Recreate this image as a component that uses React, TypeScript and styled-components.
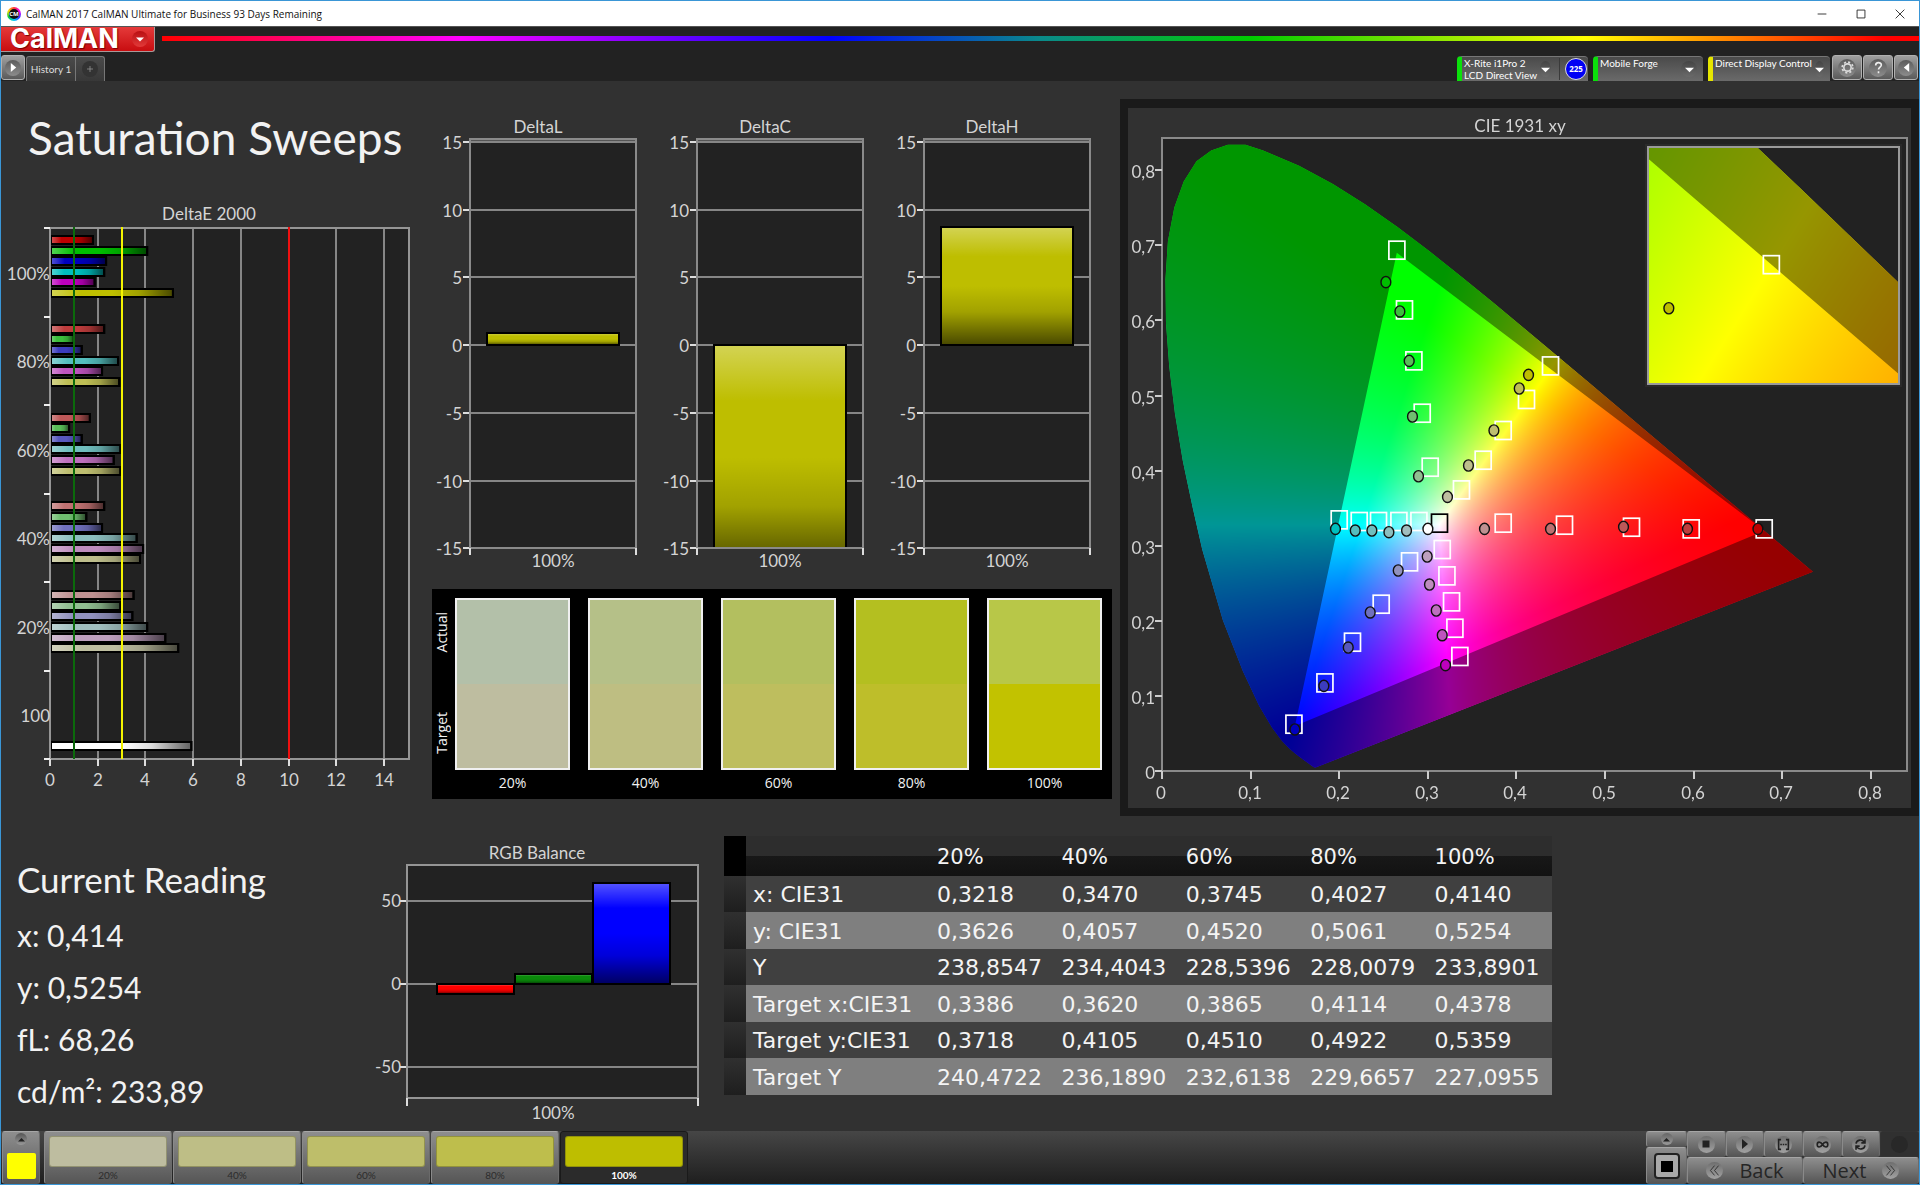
import React, { useEffect, useRef } from 'react';
import styled, { createGlobalStyle, css } from 'styled-components';

const UI = '"Lato", "Open Sans", sans-serif';
const SYSTEM = '"Open Sans", "Noto Sans", sans-serif';

const GlobalStyle = createGlobalStyle`
  *, *::before, *::after { box-sizing: border-box; }
  body { margin: 0; background: #313131; }
  button { font: inherit; color: inherit; border: 0; padding: 0; margin: 0; background: none; cursor: pointer; }
  h1, h2, p, table { margin: 0; }
`;

/* ---------- window ---------- */

const Window = styled.div`
  min-height: 100vh;
  display: flex;
  flex-direction: column;
  border: 1px solid #3a96d6;
  background: #313131;
  color: #f2f2f2;
  font-family: ${UI};
`;

const TitleBar = styled.header`
  height: 25px;
  display: flex;
  align-items: center;
  background: #fff;
  color: #111;
  font-family: ${SYSTEM};
  font-size: 10px;
  padding-left: 6px;
`;

const AppBadge = styled.span`
  width: 14px;
  height: 14px;
  margin-right: 5px;
  border-radius: 50%;
  display: grid;
  place-items: center;
  background: conic-gradient(#f33, #f0f, #33f, #0cf, #0c4, #fd0, #f33);
`;

const AppBadgeCore = styled.span`
  width: 10px;
  height: 10px;
  border-radius: 50%;
  background: #111;
  color: #fff;
  font-size: 6px;
  font-weight: 700;
  line-height: 10px;
  text-align: center;
`;

const WindowControls = styled.div`
  margin-left: auto;
  display: flex;
`;

const WindowButton = styled.button`
  width: 39px;
  height: 24px;
  display: grid;
  place-items: center;
`;

const BrandBar = styled.div`
  height: 26px;
  display: flex;
  align-items: flex-start;
  gap: 7px;
  background: #222;
  border-top: 1px solid #555;
`;

const Brand = styled.button`
  width: 154px;
  height: 25px;
  display: flex;
  align-items: center;
  justify-content: space-between;
  padding: 0 6px 0 9px;
  border-right: 1px solid #a99;
  border-bottom: 1px solid #a99;
  border-radius: 0 0 3px 0;
  background: linear-gradient(#e53a3a, #c80d10);
  color: #fff;
  font-family: "Inter", sans-serif;
  font-size: 27px;
  font-weight: 700;
  line-height: 24px;
  text-shadow: 1px 1px 1px #7a0000;
`;

const Spectrum = styled.div`
  flex: 1;
  height: 5px;
  margin-top: 9px;
  background: linear-gradient(90deg, #f00, #f0f 17%, #00f 38%, #0a8a8a 50%, #0c0 62%, #ff0 81%, #f00 98%);
`;

const TabBar = styled.nav`
  height: 29px;
  display: flex;
  align-items: flex-end;
  background: #222;
  font-size: 10px;
  line-height: 12px;
`;

const SquareButton = styled.button<{ $wide?: boolean }>`
  width: ${p => (p.$wide ? 30 : 24)}px;
  height: 25px;
  margin: 0 1px 1px 0;
  display: grid;
  place-items: center;
  border: 1px solid #b0b0b0;
  border-radius: 3px;
  background: linear-gradient(#a0a0a0, #5a5a5a);
  color: #eee;
`;

const Tab = styled.button<{ $narrow?: boolean }>`
  height: 25px;
  width: ${p => (p.$narrow ? 29 : 50)}px;
  display: grid;
  place-items: center;
  border: 1px solid #777;
  border-bottom: 0;
  border-left-width: ${p => (p.$narrow ? 0 : 1)}px;
  border-radius: ${p => (p.$narrow ? '0 3px 0 0' : '3px 0 0 0')};
  background: linear-gradient(#4a4a4a, #383838);
  color: #ddd;
`;

const Knob = styled.span<{ $size: number; $tone?: string }>`
  width: ${p => p.$size}px;
  height: ${p => p.$size}px;
  border-radius: 50%;
  display: grid;
  place-items: center;
  background: ${p => p.$tone || 'linear-gradient(#5c5c5c, #8c8c8c)'};
`;

const DeviceKnob = styled(Knob)`
  align-self: flex-end;
  margin-bottom: 4px;
`;

const Devices = styled.div`
  margin-left: auto;
  display: flex;
  align-items: flex-end;
  gap: 5px;
  padding-right: 2px;
`;

const Device = styled.button<{ $led: string; $width: number }>`
  height: 25px;
  width: ${p => p.$width}px;
  display: flex;
  align-items: flex-start;
  padding: 0 6px 0 2px;
  gap: 3px;
  border-top: 1px solid #777;
  border-left: 5px solid ${p => p.$led};
  border-radius: 4px 4px 0 0;
  background: linear-gradient(#4a4a4a, #6a6a6a);
  color: #fff;
  text-align: left;
`;

const DeviceText = styled.span`
  flex: 1;
  white-space: pre;
`;

const Counter = styled.span`
  width: 29px;
  height: 22px;
  margin: 1px -5px 0 5px;
  padding-left: 5px;
  border-left: 1px solid #3a3a3a;
`;

const CounterDisc = styled.span`
  width: 22px;
  height: 22px;
  display: block;
  border: 1px solid #ddd;
  border-radius: 50%;
  background: #0000f5;
  font-family: "Open Sans", sans-serif;
  font-size: 8px;
  font-weight: 700;
  line-height: 20px;
  text-align: center;
`;

/* ---------- workspace ---------- */

const Workspace = styled.main`
  flex: 1;
  padding-top: 1px;
`;

const Upper = styled.section`
  display: grid;
  grid-template-columns: minmax(0, 419fr) minmax(0, 700fr) minmax(0, 799fr);
  align-items: start;
`;

const Lower = styled.section`
  display: grid;
  grid-template-columns: minmax(0, 369fr) minmax(0, 354fr) minmax(0, 828fr) minmax(0, 367fr);
  align-items: start;
  padding-top: 1px;
`;

const PageTitle = styled.h1`
  padding: 26px 0 32px 27px;
  font-size: 46px;
  font-weight: 400;
  line-height: 60px;
  white-space: nowrap;
`;

const Chart = styled.svg`
  display: block;
  width: 100%;
  height: auto;
  font-family: ${UI};
  font-size: 17px;
  fill: #d4d4d4;
`;

const Middle = styled.div`
  padding-top: 28px;
`;

const DeltaRow = styled.div`
  display: grid;
  grid-template-columns: repeat(3, minmax(0, 1fr));
  padding-right: 19px;
`;

const Swatches = styled.div`
  margin: 19px 8px 0 12px;
  padding: 9px 10px 0 0;
  height: 210px;
  display: flex;
  background: #000;
`;

const SideLabels = styled.div`
  width: 23px;
  height: 172px;
  padding: 14px 4px 16px 0;
  display: flex;
  flex-direction: column;
  justify-content: space-between;
  align-items: center;
  font-family: ${SYSTEM};
  font-size: 14px;
  line-height: 16px;
`;

const SideLabel = styled.span`
  writing-mode: vertical-rl;
  transform: rotate(180deg);
`;

const SwatchGrid = styled.div`
  flex: 1;
  display: grid;
  grid-template-columns: repeat(5, minmax(0, 1fr));
  gap: 18px;
`;

const SwatchLabel = styled.p`
  padding-top: 3px;
  font-family: ${SYSTEM};
  font-size: 14px;
  line-height: 20px;
  text-align: center;
`;

const SwatchBox = styled.div<{ $actual: string; $target: string }>`
  height: 172px;
  border: 2px solid #f0f0f0;
  background: linear-gradient(${p => p.$actual} 50%, ${p => p.$target} 50%);
`;

const CiePanel = styled.div`
  margin-top: 17px;
  border: 8px solid #1a1a1a;
  border-top-width: 9px;
  display: grid;
`;

const CieCanvas = styled.canvas`
  grid-area: 1 / 1;
  width: 100%;
  height: auto;
`;

const CieOverlay = styled(Chart)`
  grid-area: 1 / 1;
`;

const Readings = styled.div`
  padding: 36px 0 0 16px;
  font-size: 30px;
  line-height: 52px;
  white-space: nowrap;
`;

const ReadingTitle = styled.h2`
  font-size: 35px;
  font-weight: 400;
  line-height: 52px;
  padding-bottom: 4px;
`;

const RgbWrap = styled.div`
  padding-top: 18px;
`;

const DataTable = styled.table`
  width: 100%;
  margin-top: 19px;
  table-layout: fixed;
  border-collapse: collapse;
  font-family: "DejaVu Sans", sans-serif;
  font-size: 22px;
  line-height: 34px;
  white-space: nowrap;
  color: #f4f4f4;
`;

const Cell = styled.td`
  padding: 2px 0 0 7px;
`;

const HeadCell = styled.th`
  height: 40px;
  padding: 2px 0 0 7px;
  font-size: 21px;
  font-weight: 400;
  line-height: 38px;
  text-align: left;
  background: linear-gradient(#2d2d2d 50%, #181818 50%, #121212);
`;

const CornerCell = styled.td`
  padding: 0;
  background: #000;
`;

const Gutter = styled.td`
  padding: 0;
  background: linear-gradient(#303030, #1e1e1e);
`;

const LabelCell = styled.th`
  padding: 2px 0 0 7px;
  font-weight: 400;
  text-align: left;
`;

const Row = styled.tr<{ $alt: boolean }>`
  height: ${p => (p.$alt ? 37 : 36)}px;
  background: ${p => (p.$alt ? '#7f7f7f' : '#404040')};
`;

/* ---------- bottom bar ---------- */

const BottomBar = styled.footer`
  height: 53px;
  display: flex;
  background: linear-gradient(#464646, #1e1e1e);
`;

const metal = css`
  border: 1px solid #9a9a9a;
  border-color: #a6a6a6 #6a6a6a #555 #8a8a8a;
  border-radius: 3px;
  background: linear-gradient(#8e8e8e, #565656);
`;

const PatternButton = styled.button`
  ${metal}
  width: 38px;
  margin: 0 4px 0 1px;
  padding: 1px 4px 4px;
  display: flex;
  flex-direction: column;
  align-items: center;
  justify-content: space-between;
`;

const PatternColor = styled.span`
  width: 29px;
  height: 26px;
  border-radius: 2px;
  background: #ff0;
`;

const StepButton = styled.button<{ $active: boolean }>`
  ${metal}
  width: 128px;
  margin-right: 1px;
  padding: 4px 4px 0;
  font-size: 10px;
  line-height: 17px;
  color: #2c2c2c;
  ${p => p.$active && css`
    border-color: #1a1a1a;
    background: #2b2b2b;
    color: #fff;
    font-weight: 700;
  `}
`;

const StepColor = styled.span<{ $color: string }>`
  display: block;
  height: 31px;
  border: 1px solid rgba(70, 70, 30, 0.35);
  border-radius: 3px;
  background: ${p => p.$color};
`;

const Transport = styled.div`
  margin-left: auto;
  display: flex;
`;

const ModeStack = styled.div`
  width: 41px;
  display: flex;
  flex-direction: column;
`;

const ModeUp = styled.button`
  ${metal}
  height: 16px;
  display: grid;
  place-items: center;
`;

const ModeStop = styled.button`
  ${metal}
  flex: 1;
  display: grid;
  place-items: center;
`;

const TransportGrid = styled.div`
  width: 232px;
  display: grid;
  grid-template-columns: repeat(6, 1fr);
  grid-template-rows: 26px 27px;
`;

const IconKey = styled.button<{ $off?: boolean }>`
  ${metal}
  display: grid;
  place-items: center;
  color: #222;
  ${p => p.$off && css`
    border-color: #333;
    background: #303030;
  `}
`;

const NavKey = styled.button`
  ${metal}
  grid-column: span 3;
  display: flex;
  align-items: center;
  justify-content: center;
  gap: 16px;
  font-family: ${SYSTEM};
  font-size: 20px;
  line-height: 22px;
  color: #262626;
`;

/* ---------- data ---------- */

type Point = [number, number];

const LEVELS = ['100%', '80%', '60%', '40%', '20%'];
const PRIMARY_TINTS = [0, 60, 88, 112, 145];
const SECONDARY_TINTS = [0, 84, 112, 140, 160];
const HUES: [number, number, number][] = [[1, 0, 0], [0, 1, 0], [0, 0, 1], [0, 1, 1], [1, 0, 1], [1, 1, 0]];

const sweepColor = (hue: number, level: number) => {
  const tint = (hue < 3 ? PRIMARY_TINTS : SECONDARY_TINTS)[level];
  return `rgb(${HUES[hue].map(c => (c ? 190 : tint)).join(',')})`;
};

const DELTA_E = [
  [1.8, 4.07, 2.35, 2.27, 1.87, 5.15],
  [2.27, 1.0, 1.33, 2.85, 2.18, 2.9],
  [1.67, 0.8, 1.33, 2.95, 2.67, 2.95],
  [2.27, 1.52, 2.18, 3.63, 3.9, 3.77],
  [3.5, 2.95, 3.45, 4.07, 4.83, 5.37],
];
const DELTA_E_WHITE = 5.92;

const SWATCHES = [
  ['20%', '#b3c0a9', '#bebda0'],
  ['40%', '#b5c088', '#bebe82'],
  ['60%', '#b3bf5f', '#bebe5e'],
  ['80%', '#b4bf20', '#bebe2a'],
  ['100%', '#b8c748', '#c2c200'],
];

const STEPS = [
  ['20%', '#bebda0'],
  ['40%', '#bebe86'],
  ['60%', '#bebe6a'],
  ['80%', '#bebe4c'],
  ['100%', '#bebe00'],
];

const TABLE = [
  ['x: CIE31', '0,3218', '0,3470', '0,3745', '0,4027', '0,4140'],
  ['y: CIE31', '0,3626', '0,4057', '0,4520', '0,5061', '0,5254'],
  ['Y', '238,8547', '234,4043', '228,5396', '228,0079', '233,8901'],
  ['Target x:CIE31', '0,3386', '0,3620', '0,3865', '0,4114', '0,4378'],
  ['Target y:CIE31', '0,3718', '0,4105', '0,4510', '0,4922', '0,5359'],
  ['Target Y', '240,4722', '236,1890', '232,6138', '229,6657', '227,0955'],
];

// Targets and measurements per hue (R, G, B, C, M, Y), 100% down to 20%.
const TARGETS: Point[][] = [
  [[0.6797, 0.3224], [0.5973, 0.3224], [0.5299, 0.3246], [0.4543, 0.3273], [0.3851, 0.33]],
  [[0.2651, 0.6935], [0.2737, 0.614], [0.2843, 0.5461], [0.2937, 0.4764], [0.3027, 0.4045]],
  [[0.1489, 0.0623], [0.1839, 0.1173], [0.215, 0.1715], [0.2474, 0.2221], [0.2794, 0.2785]],
  [[0.2, 0.3344], [0.2226, 0.3322], [0.2444, 0.3322], [0.2674, 0.3322], [0.29, 0.3322]],
  [[0.3362, 0.1525], [0.3306, 0.1901], [0.3268, 0.2252], [0.3216, 0.2598], [0.3163, 0.2949]],
  [[0.4385, 0.5394], [0.4114, 0.4947], [0.3851, 0.4534], [0.3625, 0.4138], [0.338, 0.3743]],
];
const MEASURED: Point[][] = [
  [[0.6726, 0.3224], [0.5931, 0.3224], [0.5209, 0.325], [0.4385, 0.3224], [0.364, 0.3224]],
  [[0.2527, 0.6509], [0.2685, 0.6119], [0.279, 0.5461], [0.2827, 0.472], [0.2895, 0.3925]],
  [[0.15, 0.0553], [0.1827, 0.1133], [0.2102, 0.1644], [0.235, 0.2111], [0.2666, 0.267]],
  [[0.1958, 0.3224], [0.2181, 0.3202], [0.2369, 0.3202], [0.2561, 0.318], [0.276, 0.3202]],
  [[0.32, 0.1409], [0.3163, 0.1808], [0.3095, 0.2137], [0.3019, 0.2483], [0.2993, 0.2856]],
  [[0.4137, 0.5274], [0.4032, 0.5093], [0.3746, 0.4534], [0.3459, 0.4068], [0.3222, 0.365]],
];

const GAMUT: Point[] = [[0.68, 0.32], [0.265, 0.69], [0.15, 0.06]];

const LOCUS: Point[] = [
  [0.1741, 0.005], [0.1733, 0.0048], [0.1714, 0.0051], [0.1689, 0.0069], [0.1644, 0.0109],
  [0.1611, 0.0138], [0.1566, 0.0177], [0.151, 0.0227], [0.144, 0.0297], [0.1355, 0.0399],
  [0.1241, 0.0578], [0.1096, 0.0868], [0.0913, 0.1327], [0.0687, 0.2007], [0.0454, 0.295],
  [0.0346, 0.3508], [0.0235, 0.4127], [0.0146, 0.476], [0.0082, 0.5384], [0.0045, 0.5963],
  [0.0039, 0.6548], [0.0067, 0.7057], [0.0139, 0.7502], [0.0245, 0.7849], [0.0389, 0.812],
  [0.0555, 0.8262], [0.0743, 0.8338], [0.0943, 0.8338], [0.1142, 0.8262], [0.1547, 0.8059],
  [0.1929, 0.7816], [0.2296, 0.7543], [0.2658, 0.7243], [0.3016, 0.6923], [0.3373, 0.6589],
  [0.3731, 0.6245], [0.4087, 0.5896], [0.4441, 0.5547], [0.4788, 0.5202], [0.5125, 0.4866],
  [0.5448, 0.4544], [0.5752, 0.4242], [0.6029, 0.3965], [0.627, 0.3725], [0.6482, 0.3514],
  [0.6658, 0.334], [0.6801, 0.3197], [0.7006, 0.2993], [0.714, 0.2859], [0.726, 0.274], [0.7347, 0.2653],
];

/* ---------- chart parts ---------- */

const Gradients = ({ id, vertical }: { id: string; vertical?: boolean }) => (
  <defs>
    <linearGradient id={id} x1="0" y1="0" x2={vertical ? 0 : 1} y2={vertical ? 1 : 0}>
      <stop offset="0" stopColor="#fff" stopOpacity="0.33" />
      <stop offset="0.25" stopColor="#fff" stopOpacity="0" />
      <stop offset="0.5" stopColor="#000" stopOpacity="0" />
      <stop offset="0.72" stopColor="#000" stopOpacity="0.15" />
      <stop offset="1" stopColor="#000" stopOpacity="0.62" />
    </linearGradient>
  </defs>
);

interface BarProps { x: number; y: number; w: number; h: number; color: string; shade: string }

const Bar = ({ x, y, w, h, color, shade }: BarProps) => (
  <g stroke="#000" strokeWidth={2}>
    <rect x={x} y={y} width={w} height={h} fill={color} />
    <rect x={x} y={y} width={w} height={h} fill={`url(#${shade})`} />
  </g>
);

const DeltaEChart = () => {
  const left = 49, right = 408, top = 28, bottom = 559, unit = 23.87, band = 88.5;
  const px = (v: number) => Math.round(left + v * unit);
  return (
    <Chart viewBox="0 0 419 600" role="img" aria-label="DeltaE 2000">
      <Gradients id="shade-e" />
      <text x="208" y="20" textAnchor="middle">DeltaE 2000</text>
      <rect x={left} y={top} width={right - left} height={bottom - top} fill="#222" />
      {[2, 4, 6, 8, 10, 12, 14].map(v => (
        <path key={v} d={`M${px(v)} ${top}V${bottom}`} stroke="#868686" strokeWidth="2" />
      ))}
      {DELTA_E.map((group, g) =>
        group.map((v, i) => (
          <Bar key={`${g}-${i}`} x={left + 1} y={Math.round(36 + g * 88.8 + i * 10.6)} w={v * unit - 1} h={8}
            color={sweepColor(i, g)} shade="shade-e" />
        )),
      )}
      <Bar x={left + 1} y={542} w={DELTA_E_WHITE * unit - 1} h={8} color="#fff" shade="shade-e" />
      <rect x={left} y={top} width={right - left} height={bottom - top} fill="none" stroke="#959595" strokeWidth="2" />
      <path d={`M${px(1)} ${top - 1}V${bottom}`} stroke="#0b6a0b" strokeWidth="2" />
      <path d={`M${px(3)} ${top - 1}V${bottom}`} stroke="#f4f400" strokeWidth="2" />
      <path d={`M${px(10)} ${top - 1}V${bottom}`} stroke="#f01010" strokeWidth="2" />
      {[0, 1, 2, 3, 4, 5, 6].map(i => (
        <path key={i} d={`M${left - 6} ${Math.round(top + i * band)}H${left}`} stroke="#eee" strokeWidth="2" />
      ))}
      {[...LEVELS, '100'].map((label, i) => (
        <text key={i} x={left} y={Math.round(80 + i * 88.4)} textAnchor="end">{label}</text>
      ))}
      {[0, 2, 4, 6, 8, 10, 12, 14].map(v => (
        <g key={v}>
          <path d={`M${px(v)} ${bottom}v7`} stroke="#ddd" strokeWidth="2" />
          <text x={px(v)} y="586" textAnchor="middle">{v}</text>
        </g>
      ))}
    </Chart>
  );
};

const DeltaChart = ({ name, value }: { name: string; value: number }) => {
  const left = 50, right = 216, top = 29, zero = 235, bottom = 438;
  const y = (v: number) => Math.round(zero - v * 13.55);
  const shade = `shade-${name}`;
  const barTop = value > 0 ? y(value) : zero;
  const barEnd = value > 0 ? zero : y(value);
  const clip = `clip-${name}`;
  return (
    <Chart viewBox="0 0 227 460" role="img" aria-label={name}>
      <Gradients id={shade} vertical />
      <clipPath id={clip}><rect x={left} y={top} width={right - left} height={bottom - top} /></clipPath>
      <text x="118" y="23" textAnchor="middle">{name}</text>
      <rect x={left} y={top} width={right - left} height={bottom - top} fill="#222" />
      <rect x={left} y={top} width={right - left} height="3" fill="#555" />
      {[15, 10, 5, 0, -5, -10, -15].map(v => (
        <g key={v}>
          <path d={`M${left} ${y(v)}H${right}`} stroke="#868686" strokeWidth="2" />
          <path d={`M${left - 7} ${y(v)}h7`} stroke="#ddd" strokeWidth="2" />
          <text x={left - 8} y={y(v) + 7} textAnchor="end">{v}</text>
        </g>
      ))}
      <g clipPath={`url(#${clip})`}>
        <Bar x={67} y={barTop} w={132} h={barEnd - barTop} color="#bebe00" shade={shade} />
      </g>
      <rect x={left} y={top} width={right - left} height={bottom - top} fill="none" stroke="#8a8a8a" strokeWidth="2" />
      <path d={`M${left} ${bottom}v7M${right} ${bottom}v7`} stroke="#ddd" strokeWidth="2" />
      <text x="133" y="457" textAnchor="middle">100%</text>
    </Chart>
  );
};

const RgbChart = () => {
  const left = 37, right = 328, top = 30, bottom = 263, zero = 149;
  const y = (v: number) => Math.round(zero - v * 1.66);
  const bars: [number, string][] = [[-6, '#ff0000'], [6, '#0a8a0a'], [61, '#0000ff']];
  return (
    <Chart viewBox="0 0 354 290" role="img" aria-label="RGB Balance">
      <Gradients id="shade-rgb" vertical />
      <text x="167" y="24" textAnchor="middle">RGB Balance</text>
      <rect x={left} y={top} width={right - left} height={bottom - top} fill="#222" />
      {[50, 0, -50].map(v => (
        <g key={v}>
          <path d={`M${left} ${y(v)}H${right}`} stroke="#868686" strokeWidth="2" />
          <path d={`M${left - 7} ${y(v)}h7`} stroke="#ddd" strokeWidth="2" />
          <text x={left - 6} y={y(v) + 6} textAnchor="end">{v}</text>
        </g>
      ))}
      {bars.map(([v, color], i) => (
        <Bar key={color} x={67 + i * 78} y={Math.min(zero, y(v))} w={77} h={Math.abs(y(v) - zero)} color={color} shade="shade-rgb" />
      ))}
      <rect x={left} y={top} width={right - left} height={bottom - top} fill="none" stroke="#959595" strokeWidth="2" />
      <path d={`M${left} ${bottom}v8M${right} ${bottom}v8`} stroke="#ddd" strokeWidth="2" />
      <text x="183" y="284" textAnchor="middle">100%</text>
    </Chart>
  );
};

/* ---------- chromaticity diagram ---------- */

const CIE = { w: 783, h: 700, left: 34, right: 779, top: 30, bottom: 663, ux: 886, uy: 751 };
const INSET = { left: 520, top: 39, w: 251, h: 237, cx: 0.4383, cy: 0.5357, ux: 4307, uy: 4152 };

type Project = (p: Point) => Point;
const toMain: Project = ([x, y]) => [CIE.left + x * CIE.ux, CIE.bottom - y * CIE.uy];
const toInset: Project = ([x, y]) => [
  INSET.left + INSET.w / 2 + (x - INSET.cx) * INSET.ux,
  INSET.top + INSET.h / 2 - (y - INSET.cy) * INSET.uy,
];

function chromaColor(x: number, y: number): [number, number, number] {
  const yy = Math.max(y, 0.001);
  const X = x / yy;
  const Z = (1 - x - yy) / yy;
  const r = Math.max(0, 3.2406 * X - 1.5372 - 0.4986 * Z);
  const g = Math.max(0, -0.9689 * X + 1.8758 + 0.0415 * Z);
  const b = Math.max(0, 0.0557 * X - 0.204 + 1.057 * Z);
  const m = Math.max(r, g, b) || 1;
  return [(255 * r) / m, (255 * g) / m, (255 * b) / m];
}

function polygon(points: Point[], project: Project) {
  const path = new Path2D();
  points.forEach((p, i) => {
    const [x, y] = project(p);
    if (i) path.lineTo(x, y);
    else path.moveTo(x, y);
  });
  path.closePath();
  return path;
}

function paintRegion(
  ctx: CanvasRenderingContext2D, left: number, top: number, w: number, h: number,
  project: Project, unproject: Project,
) {
  const buffer = document.createElement('canvas');
  buffer.width = w;
  buffer.height = h;
  const bctx = buffer.getContext('2d')!;
  const image = bctx.createImageData(w, h);
  for (let j = 0; j < h; j++) {
    for (let i = 0; i < w; i++) {
      const [x, y] = unproject([left + i, top + j]);
      const [r, g, b] = chromaColor(x, y);
      image.data.set([r, g, b, 255], (j * w + i) * 4);
    }
  }
  bctx.putImageData(image, 0, 0);

  const locus = polygon(LOCUS, project);
  const outside = polygon(LOCUS, project);
  outside.addPath(polygon(GAMUT, project));
  ctx.save();
  ctx.beginPath();
  ctx.rect(left, top, w, h);
  ctx.clip();
  ctx.fillStyle = '#222';
  ctx.fillRect(left, top, w, h);
  ctx.clip(locus);
  ctx.drawImage(buffer, left, top);
  ctx.fillStyle = 'rgba(0,0,0,0.41)';
  ctx.fill(outside, 'evenodd');
  ctx.restore();
}

const Target = ({ at, color = '#fff' }: { at: Point; color?: string }) => (
  <rect x={at[0] - 8} y={at[1] - 9} width="16" height="18" fill="none" stroke={color} strokeWidth="1.7" />
);
const Reading = ({ at, color }: { at: Point; color: string }) => (
  <ellipse cx={at[0]} cy={at[1]} rx="4.9" ry="5.6" fill={color} stroke="#111" strokeWidth="1.4" />
);

const CieChart = () => {
  const ref = useRef<HTMLCanvasElement>(null);
  useEffect(() => {
    const ctx = ref.current!.getContext('2d')!;
    ctx.clearRect(0, 0, CIE.w, CIE.h);
    paintRegion(ctx, CIE.left, CIE.top, CIE.right - CIE.left, CIE.bottom - CIE.top, toMain,
      ([px, py]) => [(px - CIE.left) / CIE.ux, (CIE.bottom - py) / CIE.uy]);
    ctx.fillStyle = '#2a2a2a';
    ctx.fillRect(INSET.left - 3, INSET.top - 3, INSET.w + 6, INSET.h + 6);
    paintRegion(ctx, INSET.left, INSET.top, INSET.w, INSET.h, toInset,
      ([px, py]) => [
        INSET.cx + (px - INSET.left - INSET.w / 2) / INSET.ux,
        INSET.cy - (py - INSET.top - INSET.h / 2) / INSET.uy,
      ]);
  }, []);
  const ticks = [0, 1, 2, 3, 4, 5, 6, 7, 8];
  const label = (t: number) => (t ? `0,${t}` : '0');
  return (
    <CiePanel>
      <CieCanvas ref={ref} width={CIE.w} height={CIE.h} />
      <CieOverlay viewBox={`0 0 ${CIE.w} ${CIE.h}`} role="img" aria-label="CIE 1931 xy chromaticity diagram">
        <text x="392" y="24" textAnchor="middle">CIE 1931 xy</text>
        <rect x={CIE.left} y={CIE.top} width={CIE.right - CIE.left} height={CIE.bottom - CIE.top}
          fill="none" stroke="#8a8a8a" strokeWidth="2" />
        {ticks.map(t => {
          const [x, y] = toMain([t / 10, t / 10]).map(Math.round);
          return (
            <g key={t}>
              <path d={`M${x} ${CIE.bottom}v8M${CIE.left - 7} ${y}h7`} stroke="#ccc" strokeWidth="2" />
              <text x={x - 1} y="691" textAnchor="middle">{label(t)}</text>
              <text x={CIE.left - 7} y={y + 8} textAnchor="end">{label(t)}</text>
            </g>
          );
        })}
        {TARGETS.map((list, h) => list.map((p, i) => <Target key={`${h}-${i}`} at={toMain(p)} />))}
        <Target at={toMain([0.3132, 0.33])} color="#000" />
        {MEASURED.map((list, h) =>
          list.map((p, i) => <Reading key={`${h}-${i}`} at={toMain(p)} color={sweepColor(h, i)} />),
        )}
        <Reading at={toMain([0.3001, 0.3224])} color="#fff" />
        <rect x={INSET.left} y={INSET.top} width={INSET.w} height={INSET.h} fill="none" stroke="#9a9a9a" strokeWidth="2" />
        <Target at={toInset([0.4378, 0.5359])} />
        <Reading at={toInset([0.414, 0.5254])} color="#bebe00" />
      </CieOverlay>
    </CiePanel>
  );
};

/* ---------- icons ---------- */

const Triangle = ({ dir, size = 9, color = '#fff' }: { dir: 'down' | 'up' | 'left' | 'right'; size?: number; color?: string }) => {
  const shapes = { down: 'M0 3H10L5 8Z', up: 'M0 8H10L5 3Z', left: 'M8 0V10L2 5Z', right: 'M2 0V10L8 5Z' };
  return <svg width={size} height={size} viewBox="0 0 10 10" aria-hidden="true"><path d={shapes[dir]} fill={color} /></svg>;
};

const Stroke = ({ d, size = 13, width = 2, color = '#222' }: { d: string; size?: number; width?: number; color?: string }) => (
  <svg width={size} height={size} viewBox="0 0 16 16" fill="none" stroke={color} strokeWidth={width} aria-hidden="true"><path d={d} /></svg>
);

const GearIcon = () => (
  <svg width="13" height="13" viewBox="0 0 16 16" fill="none" stroke="#ddd" aria-hidden="true">
    <circle cx="8" cy="8" r="4.5" strokeWidth="2" />
    <circle cx="8" cy="8" r="6.6" strokeWidth="2" strokeDasharray="2.6 2.58" />
  </svg>
);

const DEVICE_TONE = 'linear-gradient(#444, #6a6a6a)';
const KEY_TONE = 'linear-gradient(#6e6e6e, #a2a2a2)';

export default function App() {
  return (
    <Window>
      <GlobalStyle />
      <TitleBar>
        <AppBadge><AppBadgeCore>CM</AppBadgeCore></AppBadge>
        CalMAN 2017 CalMAN Ultimate for Business 93 Days Remaining
        <WindowControls>
          <WindowButton aria-label="Minimize"><Stroke d="M3 8H13" width={1} size={14} /></WindowButton>
          <WindowButton aria-label="Maximize"><Stroke d="M3.500 3.500H12.500V12.500H3.500Z" width={1} size={14} /></WindowButton>
          <WindowButton aria-label="Close"><Stroke d="M3 3L13 13M13 3L3 13" width={1} size={14} /></WindowButton>
        </WindowControls>
      </TitleBar>

      <BrandBar>
        <Brand>
          CalMAN
          <Knob $size={16} $tone="linear-gradient(#b80f12, #e23a3a)"><Triangle dir="down" size={8} /></Knob>
        </Brand>
        <Spectrum />
      </BrandBar>

      <TabBar>
        <SquareButton aria-label="Expand"><Knob $size={16}><Triangle dir="right" size={9} /></Knob></SquareButton>
        <Tab>History 1</Tab>
        <Tab $narrow aria-label="Add tab">
          <Knob $size={16} $tone="#333"><Stroke d="M8 4V12M4 8H12" width={1} size={12} color="#999" /></Knob>
        </Tab>
        <Devices>
          <Device $led="#0be00b" $width={131}>
            <DeviceText>{'X-Rite i1Pro 2\nLCD Direct View'}</DeviceText>
            <DeviceKnob $size={16} $tone={DEVICE_TONE}><Triangle dir="down" size={9} /></DeviceKnob>
            <Counter><CounterDisc>225</CounterDisc></Counter>
          </Device>
          <Device $led="#0be00b" $width={110}>
            <DeviceText>Mobile Forge</DeviceText>
            <DeviceKnob $size={16} $tone={DEVICE_TONE}><Triangle dir="down" size={9} /></DeviceKnob>
          </Device>
          <Device $led="#e6e600" $width={122}>
            <DeviceText>Direct Display Control</DeviceText>
            <DeviceKnob $size={16} $tone={DEVICE_TONE}><Triangle dir="down" size={9} /></DeviceKnob>
          </Device>
        </Devices>
        <SquareButton $wide aria-label="Settings"><Knob $size={18}><GearIcon /></Knob></SquareButton>
        <SquareButton $wide aria-label="Help">
          <Knob $size={18}><Stroke d="M4.500 5.500C4.500 1 11.500 1 11.500 5C11.500 7.500 8 7.500 8 10.500M8 12.500V15" width={2} color="#eee" /></Knob>
        </SquareButton>
        <SquareButton aria-label="Collapse"><Knob $size={16}><Triangle dir="left" size={9} /></Knob></SquareButton>
      </TabBar>

      <Workspace>
        <Upper>
          <div>
            <PageTitle>Saturation Sweeps</PageTitle>
            <DeltaEChart />
          </div>
          <Middle>
            <DeltaRow>
              <DeltaChart name="DeltaL" value={0.9} />
              <DeltaChart name="DeltaC" value={-16.5} />
              <DeltaChart name="DeltaH" value={8.7} />
            </DeltaRow>
            <Swatches>
              <SideLabels><SideLabel>Actual</SideLabel><SideLabel>Target</SideLabel></SideLabels>
              <SwatchGrid>
                {SWATCHES.map(([label, actual, target]) => (
                  <div key={label}>
                    <SwatchBox $actual={actual} $target={target} />
                    <SwatchLabel>{label}</SwatchLabel>
                  </div>
                ))}
              </SwatchGrid>
            </Swatches>
          </Middle>
          <CieChart />
        </Upper>

        <Lower>
          <Readings>
            <ReadingTitle>Current Reading</ReadingTitle>
            <p>x: 0,414</p>
            <p>y: 0,5254</p>
            <p>fL: 68,26</p>
            <p>cd/m²: 233,89</p>
          </Readings>
          <RgbWrap><RgbChart /></RgbWrap>
          <DataTable>
            <colgroup>
              <col style={{ width: `${(22 / 828) * 100}%` }} />
              <col style={{ width: `${(184 / 828) * 100}%` }} />
              {STEPS.map(([s]) => <col key={s} />)}
            </colgroup>
            <thead>
              <tr>
                <CornerCell />
                <HeadCell as="td" />
                {STEPS.map(([s]) => <HeadCell key={s} scope="col">{s}</HeadCell>)}
              </tr>
            </thead>
            <tbody>
              {TABLE.map(([label, ...values], i) => (
                <Row key={label} $alt={i % 2 === 1}>
                  <Gutter />
                  <LabelCell scope="row">{label}</LabelCell>
                  {values.map((v, c) => <Cell key={c}>{v}</Cell>)}
                </Row>
              ))}
            </tbody>
          </DataTable>
        </Lower>
      </Workspace>

      <BottomBar>
        <PatternButton aria-label="Pattern colour">
          <Knob $size={12} $tone="linear-gradient(#555, #999)"><Triangle dir="up" size={7} color="#222" /></Knob>
          <PatternColor />
        </PatternButton>
        {STEPS.map(([label, color]) => (
          <StepButton key={label} $active={label === '100%'}>
            <StepColor $color={color} />
            {label}
          </StepButton>
        ))}
        <Transport>
          <ModeStack>
            <ModeUp aria-label="More modes"><Knob $size={12} $tone="linear-gradient(#666, #999)"><Triangle dir="up" size={7} color="#222" /></Knob></ModeUp>
            <ModeStop aria-label="Stop mode">
              <svg width="26" height="26" viewBox="0 0 26 26" aria-hidden="true">
                <rect x="1" y="1" width="24" height="24" rx="3" fill="#aaa" stroke="#222" strokeWidth="2" />
                <rect x="7" y="8" width="12" height="11" fill="#000" />
              </svg>
            </ModeStop>
          </ModeStack>
          <TransportGrid>
            <IconKey aria-label="Stop"><Knob $size={17} $tone={KEY_TONE}><Stroke d="M4 8H12" width={8} size={14} /></Knob></IconKey>
            <IconKey aria-label="Play"><Knob $size={17} $tone={KEY_TONE}><Triangle dir="right" size={10} color="#222" /></Knob></IconKey>
            <IconKey aria-label="Read range"><Knob $size={17} $tone={KEY_TONE}><Stroke d="M5 2H2V14H5M11 2H14V14H11M4 8H6M7 8H9M10 8H12" /></Knob></IconKey>
            <IconKey aria-label="Continuous"><Knob $size={17} $tone={KEY_TONE}><Stroke d="M8 8C5.500 4 1.500 4 1.500 8S5.500 12 8 8S14.500 4 14.500 8S10.500 12 8 8Z" /></Knob></IconKey>
            <IconKey aria-label="Refresh"><Knob $size={17} $tone={KEY_TONE}><Stroke d="M2.500 7C3 2 10 1 12.500 5M13.500 1.500V6H9M13.500 9C13 14 6 15 3.500 11M2.500 14.500V10H7" /></Knob></IconKey>
            <IconKey $off disabled aria-label="Unassigned"><Knob $size={17} $tone="#282828" /></IconKey>
            <NavKey>
              <Knob $size={17} $tone={KEY_TONE}><Stroke d="M8 2L3 8L8 14M13 2L8 8L13 14" width={1} /></Knob>
              Back
            </NavKey>
            <NavKey>
              Next
              <Knob $size={17} $tone={KEY_TONE}><Stroke d="M3 2L8 8L3 14M8 2L13 8L8 14" width={1} /></Knob>
            </NavKey>
          </TransportGrid>
        </Transport>
      </BottomBar>
    </Window>
  );
}
